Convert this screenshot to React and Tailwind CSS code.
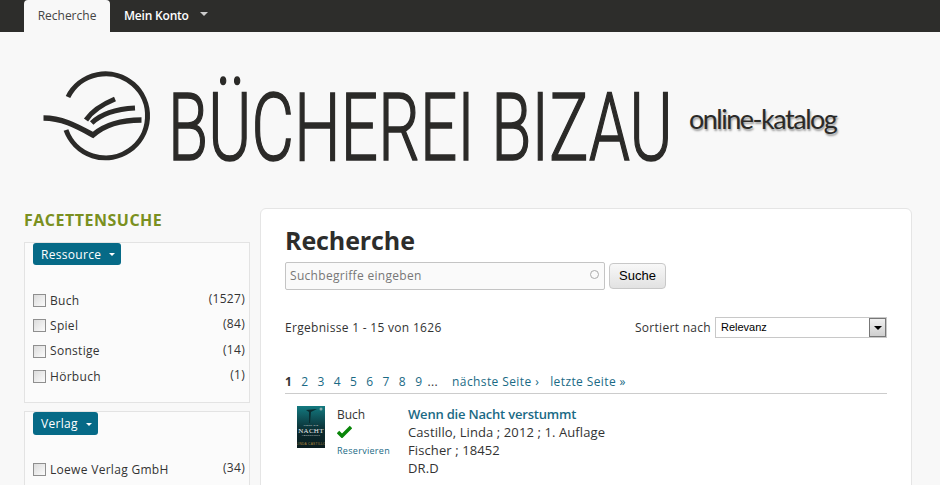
import React from 'react';

const Logo = () => (
    <svg width="630" height="125" viewBox="0 0 630 125" className="block shrink-0">
        <g fill="none" stroke="#2b2a28" strokeWidth="5">
            <path d="M25 32 A42 42 0 1 1 23 65" />
            <path d="M0.5 53 C18 53 32 60 50 70 C62 60 76 55 98.5 55" strokeWidth="5.5" />
            <path d="M43 55 C49 46 60 39 72 34" />
            <path d="M48.7 58 C58 49 74 44 92 43" />
        </g>
        <text
            transform="translate(125 95) scale(0.696 1)"
            fontFamily="Roboto, sans-serif"
            fontWeight="300"
            fontSize="94"
            fill="#2b2a28"
            stroke="#2b2a28"
            strokeWidth="1.6"
        >
            BÜCHEREI BIZAU
        </text>
    </svg>
);

const Cover = () => (
    <svg width="28" height="42" viewBox="0 0 28 42" className="block shrink-0">
        <defs>
            <linearGradient id="cov" x1="0" y1="0" x2="0" y2="1">
                <stop offset="0" stopColor="#137a80" />
                <stop offset="0.35" stopColor="#0e4a50" />
                <stop offset="0.6" stopColor="#0b2a2e" />
                <stop offset="1" stopColor="#0a1c1e" />
            </linearGradient>
        </defs>
        <rect width="28" height="42" fill="url(#cov)" />
        <path d="M9 4 L20 3 L14 6 L13 17 L12 17 L12 6 Z" fill="#0a2c30" />
        <circle cx="24" cy="3" r="1.5" fill="#8aa" />
        <text x="14" y="20" textAnchor="middle" fontFamily="Liberation Sans, sans-serif" fontSize="2.5" fill="#ccc">WENN DIE</text>
        <text x="14" y="26.5" textAnchor="middle" fontFamily="Liberation Serif, serif" fontSize="7" fill="#eeeeee">NACHT</text>
        <text x="14" y="30" textAnchor="middle" fontFamily="Liberation Sans, sans-serif" fontSize="2.5" fill="#ccc">VERSTUMMT</text>
        <text x="14" y="38.5" textAnchor="middle" fontFamily="Liberation Sans, sans-serif" fontSize="3.2" fill="#b08a40">LINDA CASTILLO</text>
    </svg>
);

const Facet = ({ label, count }) => (
    <div className="flex items-center h-[25.3px]">
        <input type="checkbox" className="appearance-none w-[13px] h-[13px] border border-[#8f8f8f] bg-gradient-to-br from-[#dcdcdc] to-[#fbfbfb] mr-[4px]" />
        <span>{label}</span>
        <span className="ml-auto -mt-[3px]">({count})</span>
    </div>
);

const FacetButton = ({ label, w }) => (
    <div className={`${w} h-[22px] bg-[#066a87] rounded-[3px] text-white text-[12px] flex items-center pl-[8px] pt-[1px]`}>
        {label}
        <span className="ml-[8px] border-x-[3px] border-x-transparent border-t-[3px] border-t-white" />
    </div>
);

const App = () => {
    return (
        <div className="h-[485px] overflow-hidden bg-[#f8f8f8] text-[12px] tracking-[0.3px] text-[#333] font-['Open_Sans',sans-serif]">
            <nav className="h-8 bg-[#2d2d2b] flex pl-6 tracking-normal">
                <a className="w-[86px] h-8 bg-[#f8f8f8] rounded-t-[4px] flex items-center justify-center text-[#444]">Recherche</a>
                <a className="ml-[14px] h-8 flex items-center font-semibold tracking-[-0.2px] text-white">Mein Konto</a>
                <span className="ml-[11px] mt-[12px] h-0 border-x-[4px] border-x-transparent border-t-[4px] border-t-[#ccc]" />
            </nav>

            <header className="h-[176px] pl-[43px] pt-[33px] flex items-start">
                <Logo />
                <span className="ml-[16px] mt-[34px] text-[27px] tracking-[-1.5px] text-[#2b2a28] font-['Lato',sans-serif] [text-shadow:1px_2px_2px_#999]">
                    online-katalog
                </span>
            </header>

            <div className="flex pl-6 gap-[10px] items-start">
                <aside className="w-[226px]">
                    <h3 className="h-[34px] pt-[1px] text-[16px] tracking-[0.5px] font-bold text-[#7a9020] leading-[22px]">FACETTENSUCHE</h3>
                    <div className="h-[161px] border border-[#e3e3e3] bg-[#fbfbfb] pl-[8px] pr-[4px]">
                        <FacetButton label="Ressource" w="w-[88px]" />
                        <div className="mt-[23px]">
                            <Facet label="Buch" count="1527" />
                            <Facet label="Spiel" count="84" />
                            <Facet label="Sonstige" count="14" />
                            <Facet label="Hörbuch" count="1" />
                        </div>
                    </div>
                    <div className="mt-[8px] h-[100px] border border-[#e3e3e3] bg-[#fbfbfb] pl-[8px] pr-[4px]">
                        <FacetButton label="Verlag" w="w-[65px] !h-[23px]" />
                        <div className="mt-[22px]">
                            <Facet label="Loewe Verlag GmbH" count="34" />
                        </div>
                    </div>
                </aside>

                <main className="w-[652px] h-[300px] bg-white border border-[#e5e5e5] rounded-[6px] px-[24px] pt-[14px]">
                    <h1 className="text-[25px] tracking-[-0.1px] font-bold text-[#2d2d2b] leading-[34px]">Recherche</h1>
                    <div className="flex items-center gap-[4px] mt-[5px]">
                        <div className="w-[320px] h-[28px] border border-[#c4c4c4] rounded-[2px] bg-[#fafafa] flex items-center px-[4px] text-[#777]">
                            Suchbegriffe eingeben
                            <span className="ml-auto mr-[1px] -mt-[3px] w-[9px] h-[9px] rounded-full border border-[#aaa]" />
                        </div>
                        <button className="w-[57px] h-[26px] border border-[#c8c8c8] rounded-[4px] bg-gradient-to-b from-[#f8f8f8] to-[#e2e2e2] text-[13px] tracking-normal text-black font-['Liberation_Sans',sans-serif]">
                            Suche
                        </button>
                    </div>
                    <div className="flex items-center mt-[27px] h-[21px]">
                        <span>Ergebnisse 1 - 15 von 1626</span>
                        <span className="ml-auto mr-[4px]">Sortiert nach</span>
                        <div className="w-[172px] h-[21px] border border-[#c8c8c8] flex items-center pl-[5px] text-[11px] tracking-normal text-black font-['Liberation_Sans',sans-serif]">
                            Relevanz
                            <span className="ml-auto w-[17px] h-[19px] border border-[#777] bg-gradient-to-b from-[#f0f0f0] to-[#cfcfcf] flex items-center justify-center">
                                <span className="border-x-[4px] border-x-transparent border-t-[4px] border-t-black" />
                            </span>
                        </div>
                    </div>
                    <div className="mt-[33px] h-[23px] border-b border-[#ccc] flex items-start pt-[2px] tracking-[0.4px] text-[#1a6a85]">
                        <b className="text-[#333] mr-[9px]">1</b>
                        <span className="mr-[9px]">2</span>
                        <span className="mr-[9px]">3</span>
                        <span className="mr-[9px]">4</span>
                        <span className="mr-[9px]">5</span>
                        <span className="mr-[9px]">6</span>
                        <span className="mr-[9px]">7</span>
                        <span className="mr-[9px]">8</span>
                        <span className="mr-[5px]">9</span>
                        <span className="mr-[14px] text-[#333]">...</span>
                        <span className="mr-[11px]">nächste Seite ›</span>
                        <span>letzte Seite »</span>
                    </div>
                    <div className="flex pl-[12px] pt-[12px]">
                        <Cover />
                        <div className="ml-[12px] w-[71px]">
                            <div className="leading-[18px] tracking-normal">Buch</div>
                            <svg width="15" height="13" viewBox="0 0 15 13" className="block mt-[1px]">
                                <path d="M1 7 L5 11 L14 2" fill="none" stroke="#0a860a" strokeWidth="3.5" />
                            </svg>
                            <div className="mt-[6px] text-[9px] text-[#1a6a85]">Reservieren</div>
                        </div>
                        <div className="text-[13px] tracking-[0.1px] leading-[18px] -mt-[1px]">
                            <div className="font-semibold tracking-[-0.2px] text-[#1a6a85]">Wenn die Nacht verstummt</div>
                            <div>Castillo, Linda ; 2012 ; 1. Auflage</div>
                            <div>Fischer ; 18452</div>
                            <div>DR.D</div>
                        </div>
                    </div>
                </main>
            </div>
        </div>
    );
};

export default App;
